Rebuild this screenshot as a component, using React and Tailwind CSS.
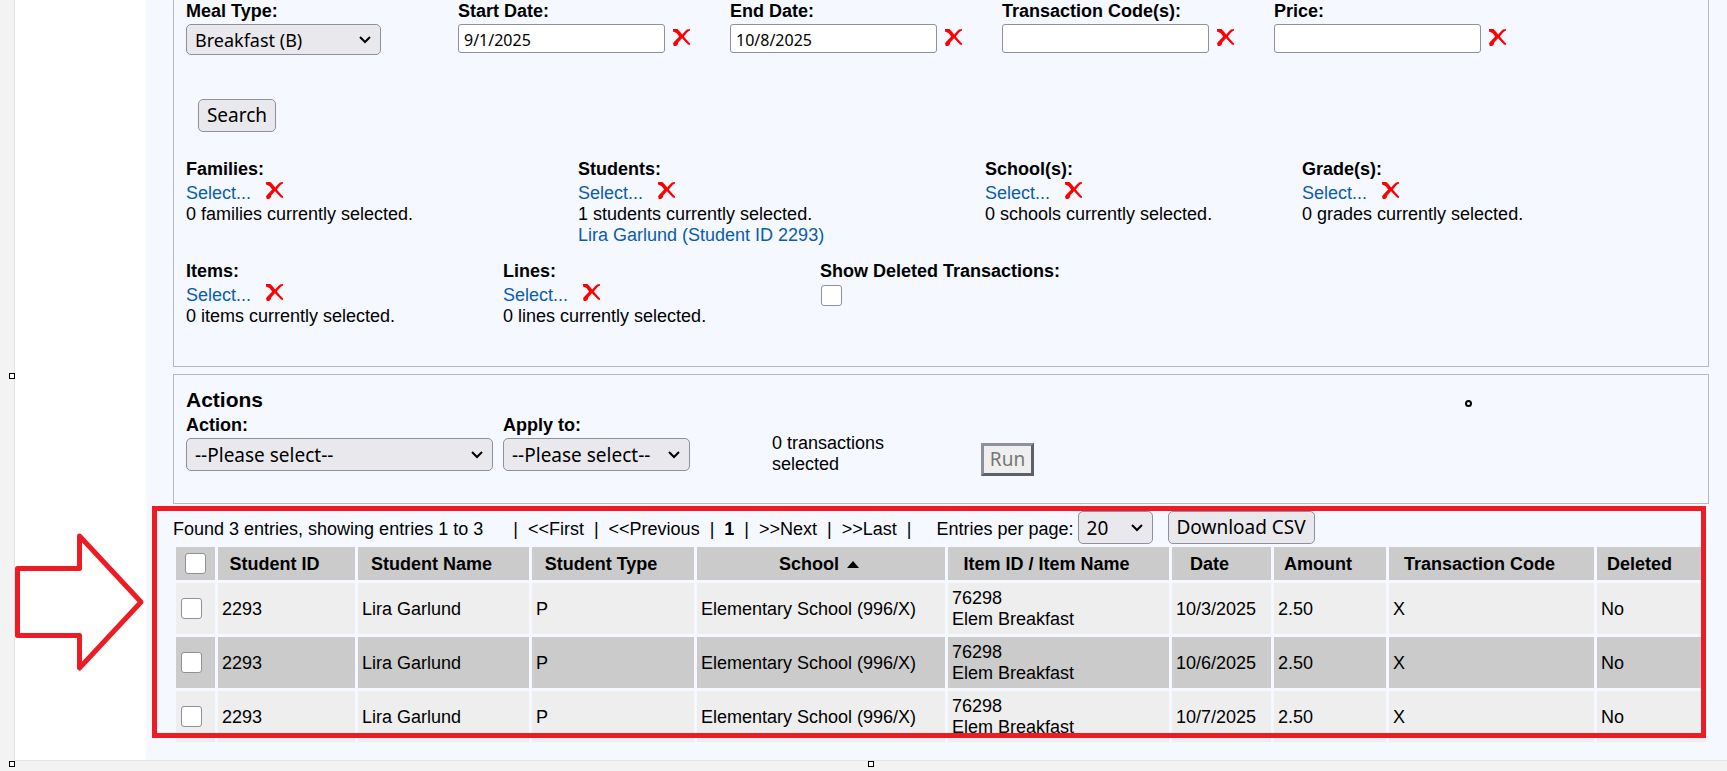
import React, { useState } from "react";

const SANS = "font-['Liberation_Sans',Arial,sans-serif]";
const CONTROL = "font-['Noto_Sans',Tahoma,sans-serif]";

const fields = [
  { id: "startDate", label: "Start Date:", value: "9/1/2025" },
  { id: "endDate", label: "End Date:", value: "10/8/2025" },
  { id: "transactionCodes", label: "Transaction Code(s):", value: "" },
  { id: "price", label: "Price:", value: "" },
];

const columns = [
  { label: "Student ID", width: "w-[137px]" },
  { label: "Student Name", width: "w-[171px]" },
  { label: "Student Type", width: "w-[162px]" },
  { label: "School", width: "w-[248px]", sorted: true },
  { label: "Item ID / Item Name", width: "w-[221px]" },
  { label: "Date", width: "w-[99px]" },
  { label: "Amount", width: "w-[112px]" },
  { label: "Transaction Code", width: "w-[205px]" },
  { label: "Deleted", width: "" },
];

const rows = [
  { id: 1, date: "10/3/2025" },
  { id: 2, date: "10/6/2025" },
  { id: 3, date: "10/7/2025" },
];

function ClearButton({ label, className }) {
  return (
    <button type="button" aria-label={label} className={`cursor-pointer ${className}`}>
      <svg width="17" height="17" viewBox="0 0 17 17" fill="#ff0000" className="block">
        <path d="M0 0h4.4l2.4 2.6 2.4 2.8 2.6-3L14 .4l3-.4v1.4l-2.2 1.4-4 4.6 3.2 3.8 3 3.4v1.4l-2-.6-6-6.2-3.6 4-.8 2.6L3 17H.8L0 14.6l1.2-1.8 5-5.2L3.4 4 0 2.6z" />
      </svg>
    </button>
  );
}

function SelectBox({ id, value, options, className, ...rest }) {
  return (
    <div className={`relative ${className}`}>
      <select
        id={id}
        defaultValue={value}
        className={`h-full w-full appearance-none rounded-[5px] border border-[#8f8f9d] bg-[#e9e9ed] pl-2 pr-7 pt-px text-black ${CONTROL}`}
        {...rest}
      >
        {options.map((o) => (
          <option key={o}>{o}</option>
        ))}
      </select>
      <svg
        className="pointer-events-none absolute right-[10px] top-1/2 -mt-1"
        width="12"
        height="8"
        viewBox="0 0 12 8"
        fill="none"
        stroke="#000"
        strokeWidth="2"
      >
        <path d="M1 1l5 5 5-5" />
      </svg>
    </div>
  );
}

function CheckBox({ id, ...rest }) {
  return (
    <input
      id={id}
      type="checkbox"
      className="block size-[21px] appearance-none rounded-[3px] border border-[#8f8f9d] bg-white checked:bg-[#0060df]"
      {...rest}
    />
  );
}

function Picker({ label, noun, count = 0, children, className }) {
  return (
    <div className={className}>
      <div className="font-bold">{label}</div>
      <div className="flex h-6 items-end gap-[15px]">
        <a href="#" className="text-[#0b5cab]">Select...</a>
        <ClearButton label={`Clear ${noun}`} className="pb-[5px]" />
      </div>
      <div>{count} {noun} currently selected.</div>
      {children}
    </div>
  );
}

function SearchPanel() {
  return (
    <form className="border border-t-0 border-[#b9b9b9] px-3 pb-[39px] pt-px" onSubmit={(e) => e.preventDefault()}>
      <div className="flex h-[54px]">
        <div className="w-[272px]">
          <label htmlFor="mealType" className="block font-bold">Meal Type:</label>
          <SelectBox
            id="mealType"
            value="Breakfast (B)"
            options={["Breakfast (B)", "Lunch (L)"]}
            className="mt-[2px] h-[31px] w-[195px] text-[18px]"
          />
        </div>
        {fields.map((f) => (
          <div key={f.id} className="w-[272px]">
            <label htmlFor={f.id} className="block font-bold">{f.label}</label>
            <div className="mt-[2px] flex items-center gap-2">
              <input
                id={f.id}
                type="text"
                defaultValue={f.value}
                className={`h-[29px] w-[207px] rounded-[3px] border border-[#8f8f9d] bg-white px-[5px] pt-[2px] text-[16px] ${CONTROL}`}
              />
              <ClearButton label={`Clear ${f.label}`} className="pb-[2px]" />
            </div>
          </div>
        ))}
      </div>

      <button
        type="submit"
        className={`ml-3 mt-11 block h-[33px] w-[78px] rounded-[5px] border border-[#8f8f9d] bg-[#e9e9ed] text-[19px] leading-[31px] ${CONTROL}`}
      >
        Search
      </button>

      <div className="mt-[27px] flex">
        <Picker label="Families:" noun="families" className="w-[392px]" />
        <Picker label="Students:" noun="students" count={1} className="w-[407px]">
          <a href="#" className="block text-[#0b5cab]">Lira Garlund (Student ID 2293)</a>
        </Picker>
        <Picker label="School(s):" noun="schools" className="w-[317px]" />
        <Picker label="Grade(s):" noun="grades" className="w-[317px]" />
      </div>

      <div className="mt-[15px] flex">
        <Picker label="Items:" noun="items" className="w-[317px]" />
        <Picker label="Lines:" noun="lines" className="w-[317px]" />
        <div>
          <label htmlFor="showDeleted" className="block font-bold">Show Deleted Transactions:</label>
          <div className="ml-px mt-[3px]">
            <CheckBox id="showDeleted" />
          </div>
        </div>
      </div>
    </form>
  );
}

function ActionsPanel() {
  return (
    <section className="relative mt-[7px] h-[130px] border border-[#b9b9b9] px-3 pt-[13px]">
      <h2 className="text-[21px] font-bold leading-6">Actions</h2>
      <div className="mt-[3px] flex">
        <div className="w-[317px]">
          <label htmlFor="action" className="block font-bold">Action:</label>
          <SelectBox
            id="action"
            value="--Please select--"
            options={["--Please select--"]}
            className="mt-[2px] h-[33px] w-[307px] text-[19px]"
          />
        </div>
        <div className="w-[269px]">
          <label htmlFor="applyTo" className="block font-bold">Apply to:</label>
          <SelectBox
            id="applyTo"
            value="--Please select--"
            options={["--Please select--"]}
            className="mt-[2px] h-[33px] w-[187px] text-[19px]"
          />
        </div>
        <div className="mt-[18px] w-[209px]">
          0 transactions
          <br />
          selected
        </div>
        <button
          type="button"
          disabled
          className={`mt-7 h-[33px] w-[53px] border-[3px] border-b-[#5f5f69] border-l-[#8f8f9d] border-r-[#5f5f69] border-t-[#8f8f9d] bg-[#efefef] text-[19px] leading-[27px] text-[#767676] ${CONTROL}`}
        >
          Run
        </button>
      </div>
      {/* stray pen dot */}
      <span className="absolute right-[236px] top-[25px] size-[7px] rounded-full border-2 border-black bg-white" />
    </section>
  );
}

function Pager() {
  return (
    <div className="flex h-[33px] items-end whitespace-nowrap">
      <span className="pb-1">Found 3 entries, showing entries 1 to 3</span>
      <nav className="ml-[30px] flex gap-[10px] pb-1">
        <span>|</span>
        <a href="#">&lt;&lt;First</a>
        <span>|</span>
        <a href="#">&lt;&lt;Previous</a>
        <span>|</span>
        <b>1</b>
        <span>|</span>
        <a href="#">&gt;&gt;Next</a>
        <span>|</span>
        <a href="#">&gt;&gt;Last</a>
        <span>|</span>
      </nav>
      <label htmlFor="perPage" className="ml-[25px] pb-1">Entries per page:</label>
      <SelectBox
        id="perPage"
        value="20"
        options={["10", "20", "50"]}
        className="ml-1 h-[33px] w-[75px] text-[19px]"
      />
      <button
        type="button"
        className={`ml-[15px] h-[33px] w-[147px] rounded-[5px] border border-[#8f8f9d] bg-[#e9e9ed] text-[19px] leading-[31px] ${CONTROL}`}
      >
        Download CSV
      </button>
    </div>
  );
}

function Results() {
  const [selected, setSelected] = useState([]);

  const toggle = (id) =>
    setSelected((prev) => (prev.includes(id) ? prev.filter((x) => x !== id) : [...prev, id]));

  return (
    <section className="relative pt-[7px]">
      <Pager />
      <table className="w-full table-fixed border-separate border-spacing-[3px]">
        <thead>
          <tr className="h-[33px] bg-[#cbcbcb]">
            <th className="w-[39px] p-0">
              <div className="flex justify-center">
                <CheckBox
                  aria-label="Select all"
                  checked={selected.length === rows.length}
                  onChange={(e) => setSelected(e.target.checked ? rows.map((r) => r.id) : [])}
                />
              </div>
            </th>
            {columns.map((c) => (
              <th key={c.label} className={`whitespace-nowrap p-0 pt-px ${c.width}`}>
                <div className="flex items-center justify-center">
                  {c.label}
                  <span className="w-6 pl-2">
                    {c.sorted && (
                      <svg width="12" height="7" viewBox="0 0 12 7" className="block">
                        <path d="M6 0l6 7H0z" />
                      </svg>
                    )}
                  </span>
                </div>
              </th>
            ))}
          </tr>
        </thead>
        <tbody>
          {rows.map((r) => (
            <tr key={r.id} className="h-[51px] bg-[#eeeeee] even:bg-[#cbcbcb] [&>td]:px-1 [&>td]:pb-0 [&>td]:pt-px">
              <td>
                <div className="pb-[2px] pl-px">
                  <CheckBox
                    aria-label={`Select transaction ${r.date}`}
                    checked={selected.includes(r.id)}
                    onChange={() => toggle(r.id)}
                  />
                </div>
              </td>
              <td>2293</td>
              <td>Lira Garlund</td>
              <td>P</td>
              <td>Elementary School (996/X)</td>
              <td>
                76298
                <br />
                Elem Breakfast
              </td>
              <td className="whitespace-nowrap">{r.date}</td>
              <td>2.50</td>
              <td>X</td>
              <td>No</td>
            </tr>
          ))}
        </tbody>
      </table>
      {/* highlight frame around the results */}
      <div className="pointer-events-none absolute -left-[21px] bottom-[7px] right-[3px] top-[2px] border-[5px] border-[#ed1c24]" />
    </section>
  );
}

function Handle({ className }) {
  return <span className={`absolute size-[6px] border border-black bg-white ${className}`} />;
}

export default function App() {
  return (
    <div className={`min-h-screen bg-[#f3f3f3] pl-[14px] text-[18px] leading-[21px] text-black ${SANS}`}>
      <div className="relative flex border-b border-l border-[#e3e3e3] bg-white">
        <div className="flex w-[131px] shrink-0 items-end pb-[88px]">
          <svg width="131" height="140" viewBox="0 0 131 140" fill="none" stroke="#ed1c24" strokeWidth="5">
            <path d="M2.5 36.5h62V4l61.5 66-61.5 66v-32.5h-62z" strokeLinejoin="round" />
          </svg>
        </div>
        <main className="min-w-0 flex-1 bg-[#f5f8fe] pb-[15px] pl-[27px] pr-[18px]">
          <SearchPanel />
          <ActionsPanel />
          <Results />
        </main>
        <Handle className="-left-[6px] top-[373px]" />
        <Handle className="-bottom-[7px] -left-[6px]" />
        <Handle className="-bottom-[7px] left-1/2 -translate-x-1/2" />
      </div>
    </div>
  );
}
